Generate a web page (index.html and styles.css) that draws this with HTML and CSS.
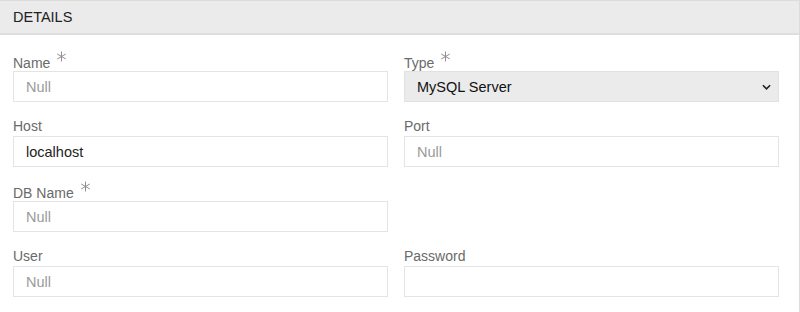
FILE: index.html
```html
<!DOCTYPE html>
<html lang="en">
<head>
    <meta charset="UTF-8">
    <meta name="viewport" content="width=device-width, initial-scale=1.0">
    <title>Connection Details</title>
    <link rel="stylesheet" href="styles.css">
</head>
<body>
    <div class="panel">
        <div class="panel-header">DETAILS</div>
        <form class="panel-body">
            <div class="field">
                <label for="name">Name <svg class="req" viewBox="0 0 10 10"><path d="M5 0.5V9.5M1.1 2.75L8.9 7.25M1.1 7.25L8.9 2.75"/></svg></label>
                <input type="text" id="name" placeholder="Null">
            </div>
            <div class="field">
                <label for="type">Type <svg class="req" viewBox="0 0 10 10"><path d="M5 0.5V9.5M1.1 2.75L8.9 7.25M1.1 7.25L8.9 2.75"/></svg></label>
                <div class="select-wrap">
                    <select id="type">
                        <option>MySQL Server</option>
                        <option>PostgreSQL</option>
                        <option>SQLite</option>
                    </select>
                    <svg class="chevron" viewBox="0 0 10 6"><path d="M1 1L5 5L9 1"/></svg>
                </div>
            </div>
            <div class="field">
                <label for="host">Host</label>
                <input type="text" id="host" value="localhost" placeholder="Null">
            </div>
            <div class="field">
                <label for="port">Port</label>
                <input type="text" id="port" placeholder="Null">
            </div>
            <div class="field">
                <label for="dbname">DB Name <svg class="req" viewBox="0 0 10 10"><path d="M5 0.5V9.5M1.1 2.75L8.9 7.25M1.1 7.25L8.9 2.75"/></svg></label>
                <input type="text" id="dbname" placeholder="Null">
            </div>
            <div class="field empty"></div>
            <div class="field">
                <label for="user">User</label>
                <input type="text" id="user" placeholder="Null">
            </div>
            <div class="field">
                <label for="password">Password</label>
                <input type="password" id="password">
            </div>
        </form>
    </div>
</body>
</html>
```

FILE: styles.css
```css
* {
    box-sizing: border-box;
    margin: 0;
    padding: 0;
    font-family: 'Liberation Sans', Arial, sans-serif;
}

body {
    background: white;
    width: 800px;
    height: 312px;
    overflow: hidden;
}

.panel {
    border-top: 1px solid #dcdcdc;
    border-right: 1px solid #dcdcdc;
    height: 312px;
}

.panel-header {
    background: #ebebeb;
    height: 34px;
    line-height: 32px;
    border-bottom: 2px solid #dedede;
    padding-left: 13px;
    font-size: 14.5px;
    color: #222;
}

.panel-body {
    display: grid;
    grid-template-columns: 375px 375px;
    column-gap: 16px;
    row-gap: 14px;
    padding: 16px 0 0 13px;
}

.field {
    height: 51px;
}

label {
    display: block;
    height: 20px;
    line-height: 21px;
    font-size: 14px;
    color: #6a6a6a;
}

.req {
    width: 11px;
    height: 11px;
    vertical-align: 6px;
    margin-left: 2px;
    fill: none;
    stroke: #8e8e8e;
    stroke-width: 0.9;
}

input,
select {
    display: block;
    width: 100%;
    height: 31px;
    border: 1px solid #e4e4e4;
    padding: 0 12px;
    font-size: 14.5px;
    color: #222;
    background: white;
    outline: none;
}

input::placeholder {
    color: #9a9a9a;
}

.select-wrap {
    position: relative;
}

select {
    appearance: none;
    -webkit-appearance: none;
    background: #ebebeb;
    border-color: #e2e2e2;
    color: #111;
}

.chevron {
    position: absolute;
    right: 8px;
    top: 13px;
    width: 9px;
    height: 6px;
    fill: none;
    stroke: #222;
    stroke-width: 1.8;
    pointer-events: none;
}
```
